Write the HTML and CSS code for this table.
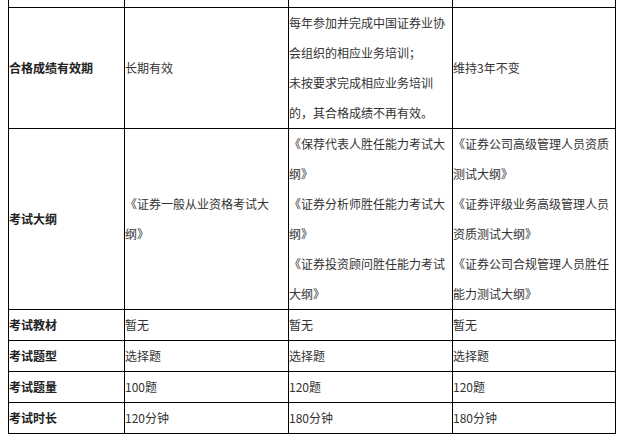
FILE: index.html
```html
<!DOCTYPE html>
<html lang="zh-CN">
<head>
<meta charset="utf-8">
<link rel="stylesheet" href="styles.css">
</head>
<body>
<table class="exam">
  <colgroup>
    <col class="c1"><col class="c2"><col class="c3"><col class="c4">
  </colgroup>
  <tr class="cut">
    <td></td><td></td><td></td><td></td>
  </tr>
  <tr>
    <th>合格成绩有效期</th>
    <td>长期有效</td>
    <td>每年参加并完成中国证券业协会组织的相应业务培训；<br>未按要求完成相应业务培训的，其合格成绩不再有效。</td>
    <td>维持3年不变</td>
  </tr>
  <tr>
    <th>考试大纲</th>
    <td>《证券一般从业资格考试大纲》</td>
    <td>《保荐代表人胜任能力考试大纲》<br>《证券分析师胜任能力考试大纲》<br>《证券投资顾问胜任能力考试大纲》</td>
    <td>《证券公司高级管理人员资质测试大纲》<br>《证券评级业务高级管理人员资质测试大纲》<br>《证券公司合规管理人员胜任能力测试大纲》</td>
  </tr>
  <tr>
    <th>考试教材</th>
    <td>暂无</td>
    <td>暂无</td>
    <td>暂无</td>
  </tr>
  <tr>
    <th>考试题型</th>
    <td>选择题</td>
    <td>选择题</td>
    <td>选择题</td>
  </tr>
  <tr>
    <th>考试题量</th>
    <td>100题</td>
    <td>120题</td>
    <td>120题</td>
  </tr>
  <tr>
    <th>考试时长</th>
    <td>120分钟</td>
    <td>180分钟</td>
    <td>180分钟</td>
  </tr>
</table>
</body>
</html>
```

FILE: styles.css
```css
html, body {
  margin: 0;
  padding: 0;
  background: #fff;
}
body {
  padding-left: 8px;
  font-family: "Noto Sans CJK SC", "Noto Sans", sans-serif;
  font-size: 12px;
  color: #333;
  text-spacing-trim: space-all;
}
.exam {
  border-collapse: collapse;
  table-layout: fixed;
  width: 607px;
}
.exam .c1 { width: 116px; }
.exam .c2 { width: 164px; }
.exam .c3 { width: 164px; }
.exam .c4 { width: 163px; }
.exam th,
.exam td {
  border: 1px solid #000;
  padding: 0;
  line-height: 30px;
  vertical-align: middle;
  text-align: left;
  line-break: strict;
  text-spacing-trim: space-all;
}
.exam th {
  font-weight: bold;
  color: #222;
}
.exam .cut td {
  border-top: 0;
  height: 7px;
  line-height: 7px;
}
```
